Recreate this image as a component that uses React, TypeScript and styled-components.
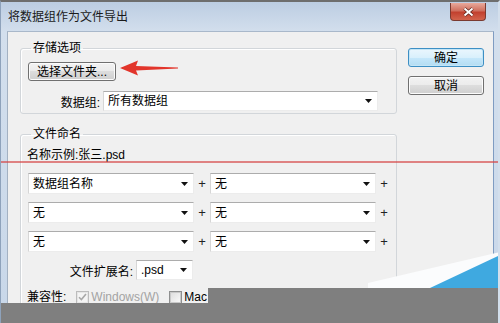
import React from 'react';
import styled, { createGlobalStyle } from 'styled-components';

const GlobalStyle = createGlobalStyle`
  html, body {
    margin: 0;
    padding: 0;
    background: #7f7f7f;
  }
  body {
    font-family: "Liberation Sans", "Noto Sans CJK SC", sans-serif;
    font-size: 12px;
    color: #000;
  }
`;

const Window = styled.div`
  position: relative;
  width: 500px;
  height: 323px;
  box-sizing: border-box;
  overflow: hidden;
  display: flex;
  flex-direction: column;
  padding: 0 4px 0 6px;
  border-top: 2px solid #6e6e6e;
  border-left: 1px solid #8ea2bb;
  border-right: 2px solid #d3dfec;
  background: linear-gradient(#bccde2, #d3dfed 30px, #c8d7e9 100%);
`;

const TitleBar = styled.div`
  height: 29px;
  flex: none;
  display: flex;
  align-items: center;
  justify-content: space-between;
`;

const Title = styled.span`
  padding-left: 1px;
  line-height: 16px;
  color: #1a1a1a;
`;

const CloseButton = styled.div`
  align-self: flex-start;
  margin-top: 1px;
  margin-right: 8px;
  width: 36px;
  height: 18px;
  box-sizing: border-box;
  display: flex;
  align-items: center;
  justify-content: center;
  border: 1px solid #7a3a30;
  border-top: none;
  border-radius: 0 0 4px 4px;
  background: linear-gradient(#e9a99b, #d0705f 45%, #c2412f 55%, #d2634c);
`;

const Client = styled.div`
  flex: 1;
  display: flex;
  align-items: flex-start;
  padding: 8px 0 0 12px;
  background: #f0f0f0;
  border-top: 1px solid #a9b8ca;
  border-left: 1px solid #a3b1c2;
  border-right: 1px solid #7f9cc2;
`;

const Main = styled.div`
  width: 377px;
  display: flex;
  flex-direction: column;
`;

const Group = styled.fieldset<{ $gap?: number; $bottom?: number }>`
  margin: ${p => p.$gap ?? 0}px 0 0 0;
  padding: 6px 7px ${p => p.$bottom ?? 2}px 7px;
  border: 1px solid #d2d6da;
  border-radius: 3px;
  min-width: 0;
  box-shadow: inset 1px 1px 0 #fff;
`;

const Legend = styled.legend`
  margin-left: 3px;
  padding: 0 2px;
  line-height: 16px;
`;

const PushButton = styled.div<{ $primary?: boolean; $width: number }>`
  width: ${p => p.$width}px;
  height: 19px;
  box-sizing: border-box;
  display: flex;
  align-items: center;
  justify-content: center;
  border: 1px solid ${p => (p.$primary ? '#3d8fc4' : '#707070')};
  border-radius: 3px;
  background: ${p =>
    p.$primary
      ? 'linear-gradient(#eaf6fd, #d9f0fc 50%, #c6e8fb 50%, #b3dcf2)'
      : 'linear-gradient(#f2f2f2, #ebebeb 50%, #dddddd 50%, #cfcfcf)'};
  box-shadow: inset 0 0 0 1px ${p => (p.$primary ? '#c4e5f6' : '#fcfcfc')};
  line-height: 14px;
`;

const FieldRow = styled.div<{ $gap: number }>`
  display: flex;
  align-items: center;
  margin-top: ${p => p.$gap}px;
`;

const FieldLabel = styled.span<{ $width: number }>`
  width: ${p => p.$width}px;
  flex: none;
  text-align: right;
  margin-right: 3px;
`;

const Select = styled.div<{ $width: number; $height?: number }>`
  width: ${p => p.$width}px;
  height: ${p => p.$height ?? 20}px;
  flex: none;
  box-sizing: border-box;
  display: flex;
  align-items: center;
  padding: 0 5px 0 4px;
  background: #fff;
  border: 1px solid #ececec;
  border-top-color: #acacac;
  border-left-color: #d6d6d6;
  line-height: 14px;
`;

const SelectText = styled.span`
  flex: 1;
  white-space: nowrap;
`;

const Example = styled.div`
  margin-left: -1px;
  line-height: 14px;
`;

const NameGrid = styled.div`
  display: grid;
  grid-template-columns: 166px 16px 166px 16px;
  grid-auto-rows: 21px;
  row-gap: 8px;
  align-items: center;
  margin-top: 11px;
`;

const Plus = styled.span`
  text-align: center;
  font-size: 13px;
  color: #222;
`;

const CompatRow = styled.div`
  display: flex;
  align-items: center;
  margin-top: 10px;
  margin-left: -1px;
  line-height: 14px;
`;

const CheckBox = styled.span<{ $disabled?: boolean }>`
  width: 13px;
  height: 13px;
  box-sizing: border-box;
  display: inline-flex;
  align-items: center;
  justify-content: center;
  margin-left: 10px;
  border: 1px solid ${p => (p.$disabled ? '#bcbcbc' : '#8e8f8f')};
  background: ${p =>
    p.$disabled ? '#f4f4f4' : 'linear-gradient(135deg, #dcdcdc, #fbfbfb)'};
  box-shadow: inset 0 0 0 1px ${p => (p.$disabled ? '#e6e6e6' : '#c9c9c9')};
`;

const CheckText = styled.span<{ $disabled?: boolean }>`
  margin-left: 2px;
  color: ${p => (p.$disabled ? '#a3a3a3' : '#000')};
`;

const Actions = styled.div`
  display: flex;
  flex-direction: column;
  gap: 9px;
  margin: 8px 0 0 11px;
`;

const RedLine = styled.div`
  position: absolute;
  left: 0;
  right: 0;
  top: 159px;
  height: 2px;
  background: rgba(214, 70, 70, 0.65);
`;

const Overlay = styled.svg`
  position: absolute;
  pointer-events: none;
`;

const Arrow = () => (
  <svg width="7" height="4" viewBox="0 0 7 4">
    <polygon points="0,0 7,0 3.5,4" fill="#111" />
  </svg>
);

const Dropdown = ({ value, width, height }: { value: string; width: number; height?: number }) => (
  <Select $width={width} $height={height}>
    <SelectText>{value}</SelectText>
    <Arrow />
  </Select>
);

const Tick = ({ color }: { color: string }) => (
  <svg width="9" height="8" viewBox="0 0 9 8">
    <path d="M1 4.2 L3.4 6.6 L8 1" fill="none" stroke={color} strokeWidth="1.6" />
  </svg>
);

const nameRows = ['数据组名称', '无', '无'];

export default function App() {
  return (
    <>
      <GlobalStyle />
      <Window>
        <TitleBar>
          <Title>将数据组作为文件导出</Title>
          <CloseButton>
            <svg width="11" height="10" viewBox="0 0 11 10">
              <path d="M1.5 1.5 L9.5 8.5 M9.5 1.5 L1.5 8.5" stroke="#5a1f17" strokeWidth="3.4" />
              <path d="M1.5 1.5 L9.5 8.5 M9.5 1.5 L1.5 8.5" stroke="#fff" strokeWidth="2" />
            </svg>
          </CloseButton>
        </TitleBar>
        <Client>
          <Main>
            <Group>
              <Legend>存储选项</Legend>
              <PushButton $width={88}>选择文件夹...</PushButton>
              <FieldRow $gap={10}>
                <FieldLabel $width={72}>数据组:</FieldLabel>
                <Dropdown value="所有数据组" width={275} />
              </FieldRow>
            </Group>
            <Group $gap={12} $bottom={40}>
              <Legend>文件命名</Legend>
              <Example>名称示例:张三.psd</Example>
              <NameGrid>
                {nameRows.map((first, i) => (
                  <React.Fragment key={i}>
                    <Dropdown value={first} width={166} height={21} />
                    <Plus>+</Plus>
                    <Dropdown value="无" width={166} height={21} />
                    <Plus>+</Plus>
                  </React.Fragment>
                ))}
              </NameGrid>
              <FieldRow $gap={8}>
                <FieldLabel $width={105}>文件扩展名:</FieldLabel>
                <Dropdown value=".psd" width={57} />
              </FieldRow>
              <CompatRow>
                <span>兼容性:</span>
                <CheckBox $disabled>
                  <Tick color="#a8a8a8" />
                </CheckBox>
                <CheckText $disabled>Windows(W)</CheckText>
                <CheckBox />
                <CheckText>Mac</CheckText>
              </CompatRow>
            </Group>
          </Main>
          <Actions>
            <PushButton $primary $width={76}>确定</PushButton>
            <PushButton $width={76}>取消</PushButton>
          </Actions>
        </Client>

        <RedLine />
        <Overlay width="62" height="18" viewBox="0 0 62 18" style={{ left: 117, top: 57 }}>
          <polygon
            points="2,9 20,1.5 18,7 60,8.6 60,9.6 18,11.4 20,16.5"
            fill="#e2352b"
          />
        </Overlay>
        <Overlay width="500" height="83" viewBox="0 0 500 83" style={{ left: -1, top: 238 }}>
          <polygon points="368,43 500,12 500,48 368,48" fill="#fbfcfd" />
          <polygon points="430,48 500,15 500,48" fill="#3fa9e0" />
          <rect x="208" y="48" width="292" height="35" fill="#7f7f7f" />
          <rect x="0" y="63" width="500" height="20" fill="#7f7f7f" />
        </Overlay>
      </Window>
    </>
  );
}
